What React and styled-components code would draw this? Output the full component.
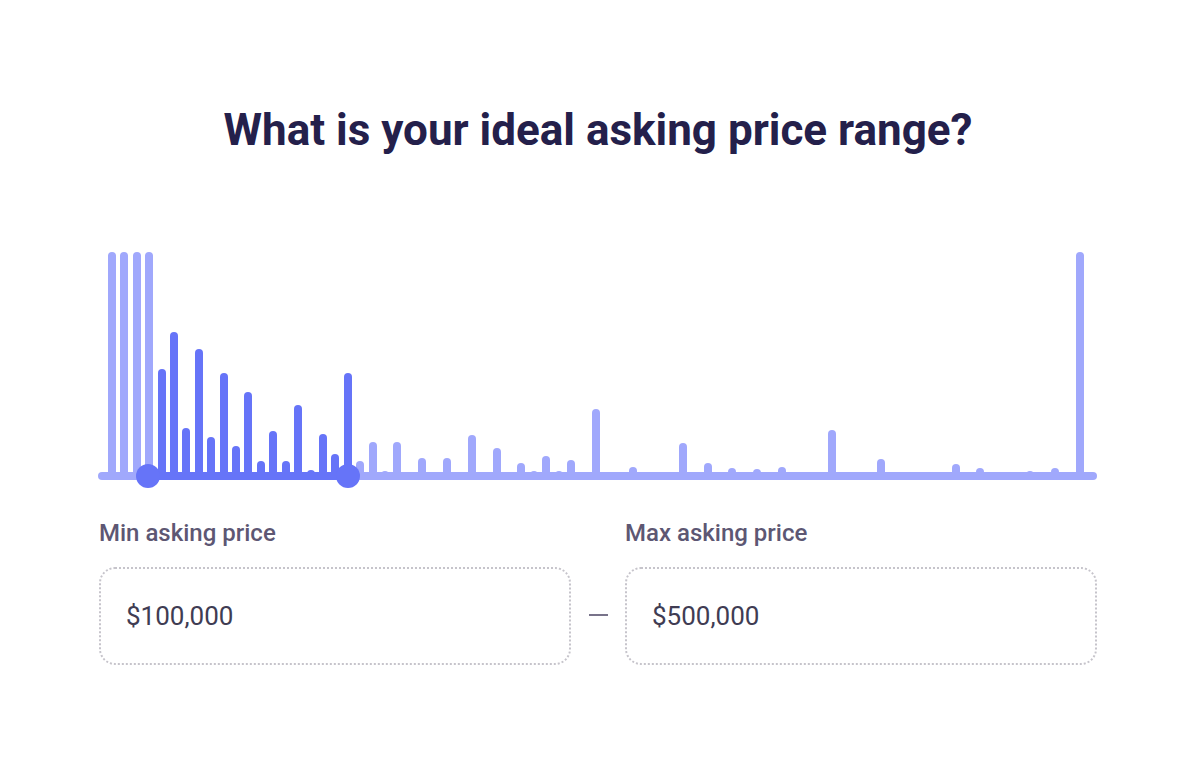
import React from "react";
import styled, { createGlobalStyle } from "styled-components";

const GlobalStyle = createGlobalStyle`
  html, body { margin: 0; padding: 0; background: #ffffff; }
  body { font-family: Roboto, "Noto Sans", "Liberation Sans", sans-serif; }
  * { box-sizing: border-box; }
`;

const LIGHT = "#a0a8fc";
const DARK = "#6674f8";

const HEIGHTS = [
  224, 224, 224, 224, 107, 144, 48, 127, 39, 103, 30, 84, 15, 45, 15, 71, 6, 42, 22, 103,
  15, 34, 5, 34, 0, 18, 0, 18, 0, 41, 0, 28, 0, 13, 5, 20, 5, 16, 0, 67,
  0, 0, 9, 0, 0, 0, 33, 0, 13, 0, 8, 0, 7, 0, 9, 0, 0, 0, 46, 0,
  0, 0, 17, 0, 0, 0, 0, 0, 12, 0, 8, 0, 0, 0, 5, 0, 8, 0, 224,
];
const ACTIVE_FROM = 4;
const ACTIVE_TO = 19;

const Page = styled.div`
  display: flex;
  justify-content: center;
  padding: 103px 0 0 6px;
`;

const Column = styled.div`
  width: 998px;
  display: flex;
  flex-direction: column;
`;

const Title = styled.h1`
  margin: 0;
  text-align: center;
  font-size: 44px;
  line-height: 54px;
  font-weight: 700;
  color: #24204b;
`;

const Chart = styled.div`
  position: relative;
  margin-top: 95px;
  height: 236px;
`;

const Bars = styled.div`
  display: flex;
  align-items: flex-end;
  justify-content: space-between;
  height: 224px;
  padding: 0 13px 0 9px;
`;

const Bar = styled.div`
  width: 8px;
  height: ${(p) => p.$h}px;
  border-radius: 4px 4px 0 0;
  background: ${(p) => (p.$active ? DARK : LIGHT)};
  visibility: ${(p) => (p.$h > 0 ? "visible" : "hidden")};
`;

const Track = styled.div`
  position: absolute;
  left: -1px;
  right: 0;
  top: 220px;
  height: 8px;
  border-radius: 4px;
  background: ${LIGHT};
`;

const ActiveTrack = styled.div`
  position: absolute;
  top: 220px;
  height: 8px;
  background: ${DARK};
`;

const Handle = styled.div`
  position: absolute;
  top: 212px;
  width: 24px;
  height: 24px;
  margin-left: -12px;
  border-radius: 50%;
  background: ${DARK};
`;

const Fields = styled.div`
  margin-top: 30px;
  display: grid;
  grid-template-columns: 1fr 54px 1fr;
  align-items: end;
`;

const Field = styled.label`
  display: flex;
  flex-direction: column;
`;

const Label = styled.span`
  font-size: 24px;
  line-height: 30px;
  font-weight: 500;
  color: #5d5773;
`;

const Box = styled.div`
  margin-top: 19px;
  height: 98px;
  border: 2px dotted #c6c4cb;
  border-radius: 16px;
  display: flex;
  align-items: center;
  padding-left: 25px;
  font-size: 26px;
  font-weight: 400;
  color: #403c53;
`;

const Dash = styled.div`
  height: 98px;
  display: flex;
  align-items: center;
  justify-content: center;
  &::before {
    content: "";
    width: 19px;
    height: 2px;
    background: #78738a;
    margin-top: -2px;
  }
`;

export default function App() {
  const left = 49;
  const right = 249;
  return (
    <>
      <GlobalStyle />
      <Page>
        <Column>
          <Title>What is your ideal asking price range?</Title>
          <Chart>
            <Bars>
              {HEIGHTS.map((h, i) => (
                <Bar key={i} $h={h} $active={i >= ACTIVE_FROM && i <= ACTIVE_TO} />
              ))}
            </Bars>
            <Track />
            <ActiveTrack style={{ left: left, width: right - left }} />
            <Handle style={{ left: left }} />
            <Handle style={{ left: right }} />
          </Chart>
          <Fields>
            <Field>
              <Label>Min asking price</Label>
              <Box>$100,000</Box>
            </Field>
            <Dash />
            <Field>
              <Label>Max asking price</Label>
              <Box>$500,000</Box>
            </Field>
          </Fields>
        </Column>
      </Page>
    </>
  );
}
